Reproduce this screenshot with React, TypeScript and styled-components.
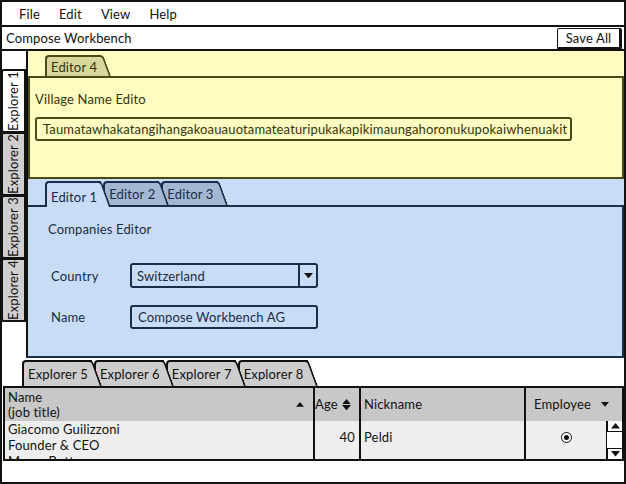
import styled, { createGlobalStyle } from 'styled-components';

const GlobalStyle = createGlobalStyle`
  body {
    margin: 0;
    background: #fff;
    font-family: Lato, "Open Sans", sans-serif;
    font-size: 13px;
    letter-spacing: 0.15px;
  }
`;

const YELLOW = { bg: '#fffcc2', tab: '#d9d79c', line: '#4b4a12', text: '#35340a' };
const BLUE = { bg: '#c8dcf5', tab: '#a4b7d2', line: '#1c2d4b', text: '#1b2a45' };

const menuItems = ['File', 'Edit', 'View', 'Help'];
const explorers = ['Explorer 1', 'Explorer 2', 'Explorer 3', 'Explorer 4'];
const bottomTabs = ['Explorer 5', 'Explorer 6', 'Explorer 7', 'Explorer 8'];
const village = 'Taumatawhakatangihangakoauauotamateaturipukakapikimaungahoronukupokaiwhenuakit';

const Triangle = ({ up, size = 8 }: { up?: boolean; size?: number }) => (
  <svg width={size} height={size * 0.6} viewBox="0 0 10 6">
    {up ? <path d="M0 6 L5 0 L10 6 Z" fill="#111" /> : <path d="M0 0 L10 0 L5 6 Z" fill="#111" />}
  </svg>
);

export default function App() {
  return (
    <>
      <GlobalStyle />
      <Window>
        <MenuBar>
          {menuItems.map((m) => (
            <MenuItem key={m}>{m}</MenuItem>
          ))}
        </MenuBar>

        <TitleBar>
          <Title>Compose Workbench</Title>
          <SaveButton>Save All</SaveButton>
        </TitleBar>

        <Main>
          <ExplorerRail>
            {explorers.map((e, i) => (
              <VTab key={e} $active={i === 0}>
                {e}
              </VTab>
            ))}
          </ExplorerRail>

          <Editors>
            <YellowPane>
              <TabStrip $h={25} $pad={17}>
                <Tab $bg={YELLOW.tab} $line={YELLOW.line} $color={YELLOW.text} $h={21} $z={3}>
                  Editor 4
                </Tab>
              </TabStrip>
              <YellowBody>
                <FieldLabel>Village Name Edito</FieldLabel>
                <VillageInput>{village}</VillageInput>
              </YellowBody>
            </YellowPane>

            <BluePane>
              <TabStrip $h={26} $pad={17}>
                <Tab $bg={BLUE.bg} $line={BLUE.line} $color={BLUE.text} $h={24} $z={5} $active>
                  <TabLabel $drop={2}>Editor 1</TabLabel>
                </Tab>
                <Tab $bg={BLUE.tab} $line={BLUE.line} $color={BLUE.text} $h={24} $z={4}>
                  Editor 2
                </Tab>
                <Tab $bg={BLUE.tab} $line={BLUE.line} $color={BLUE.text} $h={24} $z={3}>
                  Editor 3
                </Tab>
              </TabStrip>
              <BlueBody>
                <SectionTitle>Companies Editor</SectionTitle>
                <Form>
                  <FormLabel>Country</FormLabel>
                  <Select>
                    <SelectValue>Switzerland</SelectValue>
                    <SelectArrow>
                      <Triangle size={9} />
                    </SelectArrow>
                  </Select>
                  <FormLabel>Name</FormLabel>
                  <TextInput>Compose Workbench AG</TextInput>
                </Form>
              </BlueBody>
            </BluePane>
          </Editors>
        </Main>

        <TabStrip $h={28} $pad={20}>
          {bottomTabs.map((t, i) => (
            <Tab key={t} $bg="#cdcdcd" $line="#111" $color="#111" $h={26} $z={6 - i}>
              {t}
            </Tab>
          ))}
        </TabStrip>

        <Table>
          <HeaderRow>
            <HeadCell $first $between>
              <span>
                Name
                <br />
                (job title)
              </span>
              <Triangle up />
            </HeadCell>
            <HeadCell>
              Age
              <SortIcon>
                <Triangle up size={9} />
                <Triangle size={9} />
              </SortIcon>
            </HeadCell>
            <HeadCell $pad={3}>Nickname</HeadCell>
            <HeadCell $pad={8}>
              Employee
              <HeadArrow>
                <Triangle />
              </HeadArrow>
            </HeadCell>
          </HeaderRow>
          <TableBody>
            <Rows>
              <Cell $first>
                Giacomo Guilizzoni
                <br />
                Founder &amp; CEO
              </Cell>
              <Cell $right>40</Cell>
              <Cell $pad={3}>Peldi</Cell>
              <Cell $center>
                <Radio />
              </Cell>
              <Cell $first>
                Marco Botton
                <br />
                Tuttofare
              </Cell>
              <Cell $right>38</Cell>
              <Cell $pad={3} />
              <Cell $center />
            </Rows>
            <Scrollbar>
              <ScrollButton>
                <Triangle up size={9} />
              </ScrollButton>
              <ScrollTrack />
              <ScrollButton $bottom>
                <Triangle size={9} />
              </ScrollButton>
            </Scrollbar>
          </TableBody>
        </Table>

        <StatusBar />
      </Window>
    </>
  );
}

const Window = styled.div`
  width: 626px;
  height: 484px;
  box-sizing: border-box;
  border: 2px solid #111;
  display: flex;
  flex-direction: column;
  overflow: hidden;
  background: #fff;
  color: #111;
`;

const MenuBar = styled.div`
  height: 25px;
  box-sizing: border-box;
  border-bottom: 2px solid #111;
  display: flex;
  align-items: center;
  gap: 19px;
  padding-left: 17px;
`;

const MenuItem = styled.span`
  font-size: 13px;
`;

const TitleBar = styled.div`
  height: 24px;
  box-sizing: border-box;
  border-bottom: 2px solid #111;
  display: flex;
  align-items: center;
  padding-left: 4px;
`;

const Title = styled.span`
  font-size: 13px;
`;

const SaveButton = styled.div`
  margin-left: auto;
  margin-right: 2px;
  align-self: flex-start;
  margin-top: 1px;
  width: 65px;
  height: 22px;
  box-sizing: border-box;
  border: 1px solid #111;
  border-right-width: 3px;
  border-bottom-width: 3px;
  border-radius: 2px;
  background: #fff;
  display: flex;
  align-items: center;
  justify-content: center;
  font-size: 13px;
`;

const Main = styled.div`
  height: 307px;
  display: flex;
`;

const ExplorerRail = styled.div`
  width: 24px;
  border-right: 2px solid #111;
  padding-top: 19px;
  display: flex;
  flex-direction: column;
`;

const VTab = styled.div<{ $active?: boolean }>`
  height: 64px;
  box-sizing: border-box;
  margin-top: -1px;
  margin-left: -1px;
  border: 2px solid #111;
  border-radius: 0 3px 3px 0;
  background: ${(p) => (p.$active ? '#fff' : '#cfcfcf')};
  writing-mode: vertical-rl;
  transform: rotate(180deg);
  display: flex;
  align-items: center;
  justify-content: center;
  font-size: 13px;
  line-height: 1;
`;

const Editors = styled.div`
  flex: 1;
  display: flex;
  flex-direction: column;
`;

const YellowPane = styled.div`
  height: 128px;
  display: flex;
  flex-direction: column;
  background: ${YELLOW.bg};
  color: ${YELLOW.text};
`;

const BluePane = styled.div`
  flex: 1;
  display: flex;
  flex-direction: column;
  background: ${BLUE.bg};
  color: ${BLUE.text};
`;

const TabStrip = styled.div<{ $h: number; $pad: number }>`
  height: ${(p) => p.$h}px;
  flex-shrink: 0;
  position: relative;
  z-index: 2;
  display: flex;
  align-items: flex-end;
  padding-left: ${(p) => p.$pad}px;
`;

const Tab = styled.div<{
  $bg: string;
  $line: string;
  $color: string;
  $h: number;
  $z: number;
  $active?: boolean;
}>`
  position: relative;
  z-index: ${(p) => p.$z};
  height: ${(p) => p.$h + (p.$active ? 2 : 0)}px;
  margin-bottom: ${(p) => (p.$active ? -2 : 0)}px;
  box-sizing: border-box;
  padding: 2px 14px 0 6px;
  margin-right: -8px;
  display: flex;
  align-items: center;
  color: ${(p) => p.$color};
  font-size: 13px;
  white-space: nowrap;

  &::before {
    content: '';
    position: absolute;
    z-index: -1;
    left: 0;
    top: 0;
    bottom: 0;
    right: 10px;
    background: ${(p) => p.$bg};
    border: 2px solid ${(p) => p.$line};
    border-right: none;
    border-bottom: none;
    border-top-left-radius: 4px;
  }

  &::after {
    content: '';
    position: absolute;
    z-index: -1;
    top: 0;
    bottom: 0;
    right: 0;
    width: 22px;
    background: ${(p) => p.$bg};
    border-top: 2px solid ${(p) => p.$line};
    border-right: 2px solid ${(p) => p.$line};
    border-top-right-radius: 4px;
    transform: skewX(20deg);
    transform-origin: bottom right;
  }
`;

const TabLabel = styled.span<{ $drop: number }>`
  position: relative;
  top: ${(p) => p.$drop}px;
`;

const YellowBody = styled.div`
  flex: 1;
  border: 2px solid ${YELLOW.line};
  padding: 13px 0 0 5px;
`;

const FieldLabel = styled.div`
  font-size: 13px;
  line-height: 16px;
`;

const VillageInput = styled.div`
  margin-top: 10px;
  width: 537px;
  height: 24px;
  box-sizing: border-box;
  border: 2px solid ${YELLOW.line};
  border-radius: 3px;
  padding-left: 6px;
  display: flex;
  align-items: center;
  font-size: 13px;
  white-space: nowrap;
  overflow: hidden;
`;

const BlueBody = styled.div`
  flex: 1;
  border: 2px solid ${BLUE.line};
  border-left: none;
  padding: 14px 0 0 20px;
`;

const SectionTitle = styled.div`
  font-size: 13px;
  line-height: 16px;
`;

const Form = styled.div`
  margin-top: 26px;
  margin-left: 3px;
  display: grid;
  grid-template-columns: 79px 188px;
  row-gap: 17px;
  align-items: center;
`;

const FormLabel = styled.div`
  font-size: 13px;
`;

const Select = styled.div`
  height: 25px;
  box-sizing: border-box;
  border: 2px solid ${BLUE.line};
  border-radius: 3px;
  display: flex;
`;

const SelectValue = styled.div`
  flex: 1;
  display: flex;
  align-items: center;
  padding-left: 5px;
  font-size: 13px;
`;

const SelectArrow = styled.div`
  width: 16px;
  border-left: 2px solid ${BLUE.line};
  display: flex;
  align-items: center;
  justify-content: center;
`;

const TextInput = styled.div`
  height: 24px;
  box-sizing: border-box;
  border: 2px solid ${BLUE.line};
  border-radius: 3px;
  display: flex;
  align-items: center;
  padding-left: 6px;
  font-size: 13px;
`;

const Table = styled.div`
  height: 75px;
  flex-shrink: 0;
  box-sizing: border-box;
  margin-left: 1px;
  border: 2px solid #111;
  display: flex;
  flex-direction: column;
`;

const HeaderRow = styled.div`
  height: 33px;
  display: grid;
  grid-template-columns: 308px 46px 165px 1fr;
  background: #c8c8c8;
`;

const HeadCell = styled.div<{ $first?: boolean; $between?: boolean; $pad?: number }>`
  box-sizing: border-box;
  border-left: ${(p) => (p.$first ? 'none' : '2px solid #111')};
  padding-left: ${(p) => (p.$first ? 3 : p.$pad ?? 0)}px;
  padding-right: ${(p) => (p.$first ? 9 : 0)}px;
  display: flex;
  align-items: center;
  justify-content: ${(p) => (p.$between ? 'space-between' : 'flex-start')};
  font-size: 13px;
  line-height: 15px;
`;

const SortIcon = styled.span`
  display: inline-flex;
  flex-direction: column;
  gap: 1px;
  margin-left: 4px;
`;

const HeadArrow = styled.span`
  display: inline-flex;
  margin-left: 10px;
`;

const TableBody = styled.div`
  flex: 1;
  display: flex;
  overflow: hidden;
`;

const Rows = styled.div`
  flex: 1;
  display: grid;
  grid-template-columns: 308px 46px 165px 1fr;
  grid-auto-rows: 32px;
  background: #eeeeee;
`;

const Cell = styled.div<{ $first?: boolean; $right?: boolean; $center?: boolean; $pad?: number }>`
  box-sizing: border-box;
  border-left: ${(p) => (p.$first ? 'none' : '2px solid #111')};
  padding-left: ${(p) => (p.$first ? 3 : p.$pad ?? 0)}px;
  padding-right: ${(p) => (p.$right ? 4 : 0)}px;
  display: flex;
  align-items: center;
  justify-content: ${(p) => (p.$right ? 'flex-end' : p.$center ? 'center' : 'flex-start')};
  font-size: 13px;
  line-height: 16px;
`;

const Radio = styled.span`
  width: 11px;
  height: 11px;
  box-sizing: border-box;
  border: 1.5px solid #111;
  border-radius: 50%;
  background: #fff;
  display: flex;
  align-items: center;
  justify-content: center;

  &::after {
    content: '';
    width: 5px;
    height: 5px;
    border-radius: 50%;
    background: #111;
  }
`;

const Scrollbar = styled.div`
  width: 16px;
  box-sizing: border-box;
  border-left: 1px solid #111;
  background: #fff;
  display: flex;
  flex-direction: column;
`;

const ScrollButton = styled.div<{ $bottom?: boolean }>`
  height: 11px;
  box-sizing: border-box;
  border: 1.5px solid #111;
  ${(p) => (p.$bottom ? 'border-bottom: none;' : 'border-top: none;')}
  border-right: none;
  background: #fff;
  display: flex;
  align-items: center;
  justify-content: center;
`;

const ScrollTrack = styled.div`
  flex: 1;
`;

const StatusBar = styled.div`
  flex: 1;
  background: #fff;
`;
